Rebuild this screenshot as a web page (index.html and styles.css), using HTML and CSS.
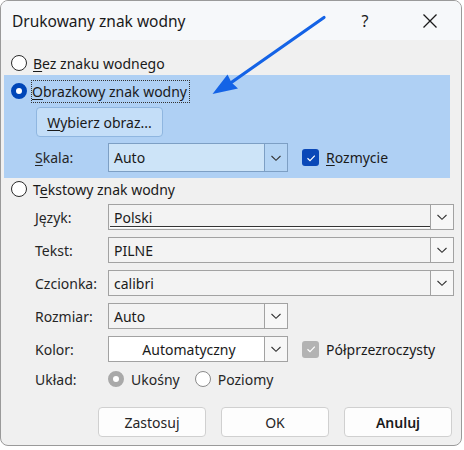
FILE: index.html
```html
<!DOCTYPE html>
<html lang="pl">
<head>
    <meta charset="UTF-8">
    <title>Drukowany znak wodny</title>
    <link rel="stylesheet" href="styles.css">
</head>
<body>
    <div class="dialog">
        <div class="titlebar">
            <span class="title">Drukowany znak wodny</span>
            <span class="help">?</span>
            <span class="close">
                <svg width="16" height="16" viewBox="0 0 16 16"><path d="M1.5 1.5 L14.5 14.5 M14.5 1.5 L1.5 14.5" stroke="#1a1a1a" stroke-width="1.3" fill="none"/></svg>
            </span>
        </div>

        <div class="content">
            <!-- brak znaku -->
            <div class="option first">
                <span class="radio"></span>
                <span><u>B</u>ez znaku wodnego</span>
            </div>

            <!-- obraz -->
            <div class="panel">
                <div class="option">
                    <span class="radio checked"></span>
                    <span class="focus"><u>O</u>brazkowy znak wodny</span>
                </div>
                <button class="pick"><u>W</u>ybierz obraz...</button>
                <div class="field skala">
                    <span class="label"><u>S</u>kala:</span>
                    <div class="combo short blue">
                        <span class="value">Auto</span>
                        <span class="drop"><svg width="12" height="8" viewBox="0 0 12 8"><path d="M1.5 2 L6 6.3 L10.5 2" stroke="#333" stroke-width="1.1" fill="none"/></svg></span>
                    </div>
                    <div class="check">
                        <span class="box on"><svg width="12" height="10" viewBox="0 0 12 10"><path d="M2.5 5.2 L5 7.6 L9.8 2.6" stroke="#fff" stroke-width="1.2" fill="none"/></svg></span>
                        <span><u>R</u>ozmycie</span>
                    </div>
                </div>
            </div>

            <!-- tekst -->
            <div class="option">
                <span class="radio"></span>
                <span>T<u>e</u>kstowy znak wodny</span>
            </div>

            <div class="fields">
                <div class="field">
                    <span class="label">Język:</span>
                    <div class="combo long lang">
                        <span class="value">Polski</span>
                        <span class="drop"><svg width="12" height="8" viewBox="0 0 12 8"><path d="M1.5 2 L6 6.3 L10.5 2" stroke="#333" stroke-width="1.1" fill="none"/></svg></span>
                    </div>
                </div>
                <div class="field">
                    <span class="label">Tekst:</span>
                    <div class="combo long">
                        <span class="value">PILNE</span>
                        <span class="drop"><svg width="12" height="8" viewBox="0 0 12 8"><path d="M1.5 2 L6 6.3 L10.5 2" stroke="#333" stroke-width="1.1" fill="none"/></svg></span>
                    </div>
                </div>
                <div class="field">
                    <span class="label">Czcionka:</span>
                    <div class="combo long">
                        <span class="value">calibri</span>
                        <span class="drop"><svg width="12" height="8" viewBox="0 0 12 8"><path d="M1.5 2 L6 6.3 L10.5 2" stroke="#333" stroke-width="1.1" fill="none"/></svg></span>
                    </div>
                </div>
                <div class="field">
                    <span class="label">Rozmiar:</span>
                    <div class="combo short">
                        <span class="value">Auto</span>
                        <span class="drop"><svg width="12" height="8" viewBox="0 0 12 8"><path d="M1.5 2 L6 6.3 L10.5 2" stroke="#333" stroke-width="1.1" fill="none"/></svg></span>
                    </div>
                </div>
                <div class="field">
                    <span class="label">Kolor:</span>
                    <div class="combo short white">
                        <span class="value center">Automatyczny</span>
                        <span class="drop"><svg width="12" height="8" viewBox="0 0 12 8"><path d="M1.5 2 L6 6.3 L10.5 2" stroke="#333" stroke-width="1.1" fill="none"/></svg></span>
                    </div>
                    <div class="check">
                        <span class="box off"><svg width="12" height="10" viewBox="0 0 12 10"><path d="M2.5 5.2 L5 7.6 L9.8 2.6" stroke="#fff" stroke-width="1.2" fill="none"/></svg></span>
                        <span>Półprzezroczysty</span>
                    </div>
                </div>
                <div class="field layout">
                    <span class="label">Układ:</span>
                    <span class="radio grey checked"></span>
                    <span class="choice">Ukośny</span>
                    <span class="radio grey"></span>
                    <span class="choice">Poziomy</span>
                </div>
            </div>

            <div class="actions">
                <button class="btn">Zastosuj</button>
                <button class="btn">OK</button>
                <button class="btn default">Anuluj</button>
            </div>
        </div>

        <!-- strzałka wskazująca opcję -->
        <svg class="arrow" width="462" height="446" viewBox="0 0 462 446">
            <path d="M323 16.5 L231 81" stroke="#1463e6" stroke-width="3.2" stroke-linecap="round" fill="none"/>
            <path d="M211.5 93 L226.5 73.5 L230.5 81.5 L237 87.5 Z" fill="#1463e6"/>
        </svg>
    </div>
</body>
</html>
```

FILE: styles.css
```css
body {
    margin: 0;
    background-color: #fff;
    font-family: "Noto Sans", "Open Sans", sans-serif;
    font-size: 14px;
    color: #1a1a1a;
}

.dialog {
    position: relative;
    width: 460px;
    height: 444px;
    border: 1px solid #9a9a9a;
    border-radius: 8px;
    background-color: #f0f0f0;
    overflow: hidden;
}

.titlebar {
    display: flex;
    align-items: center;
    height: 39px;
    background-color: #f6f8fa;
}

.title {
    margin-left: 11px;
    font-size: 15.5px;
    flex: 1;
}

.help {
    width: 20px;
    text-align: center;
    font-size: 16px;
    margin-right: 47px;
}

.close {
    display: flex;
    margin-right: 23px;
}

.content {
    padding-left: 3px;
}

u {
    text-decoration-thickness: 1px;
    text-underline-offset: 2px;
}

.option {
    display: flex;
    align-items: center;
    height: 22px;
    padding-left: 7px;
    gap: 6px;
}

.option.first {
    margin-top: 12px;
    margin-bottom: 1px;
}

.radio {
    width: 14px;
    height: 14px;
    border: 1.3px solid #2b2b2b;
    border-radius: 50%;
    background-color: #fff;
    flex: none;
}

.radio.checked {
    width: 6px;
    height: 6px;
    border: 5.5px solid #0046b8;
}

.radio.grey {
    border-color: #8a8a8a;
}

.radio.grey.checked {
    border-color: #a9a9a9;
}

.focus {
    outline: 1px dotted #333;
    outline-offset: 0;
    padding: 0 2px 0 0;
    line-height: 21px;
    margin-left: -1px;
}

.panel {
    width: 446px;
    height: 98px;
    padding-top: 5px;
    background-color: #afd0f4;
}

.pick {
    display: block;
    margin: 5px 0 6px 32px;
    width: 127px;
    height: 30px;
    border: 1px solid #8fb6e0;
    border-radius: 4px;
    background-color: #c4def8;
    font: inherit;
    color: inherit;
}

.fields {
    margin-top: 4px;
}

.field {
    display: flex;
    align-items: center;
    height: 26px;
    padding-left: 31px;
    margin-bottom: 7px;
}

.field.skala {
    height: 29px;
    margin-bottom: 0;
}

.label {
    width: 73px;
    flex: none;
    color: #262626;
}

.combo {
    display: flex;
    height: 100%;
    box-sizing: border-box;
    border: 1px solid #a2a2a2;
    background-color: #f3f3f3;
}

.combo.long {
    width: 346px;
}

.combo.short {
    width: 180px;
}

.combo.blue {
    background-color: #cde4f8;
    border-color: #7d9fc4;
}

.combo.white {
    background-color: #fff;
}

.value {
    flex: 1;
    padding-left: 5px;
    display: flex;
    align-items: center;
    position: relative;
}

.value.center {
    justify-content: center;
}

.lang .value::after {
    content: "";
    position: absolute;
    left: 1px;
    right: 0;
    bottom: 2px;
    height: 1px;
    background-color: #333;
    box-shadow: 0 1px 0 #fff;
}

.drop {
    display: flex;
    align-items: center;
    justify-content: center;
    width: 22px;
    border-left: 1px solid #a2a2a2;
    background-color: #f7f7f7;
}

.blue .drop {
    background-color: #b4d4f4;
    border-color: #7d9fc4;
}

.check {
    display: flex;
    align-items: center;
    gap: 7px;
    margin-left: 14px;
}

.box {
    display: flex;
    align-items: center;
    justify-content: center;
    width: 17px;
    height: 17px;
    border-radius: 3px;
}

.box.on {
    background-color: #0a48b8;
}

.box.off {
    background-color: #b3b3b3;
}

.field.layout {
    height: 22px;
    margin-top: -1px;
}

.choice {
    margin-left: 7px;
    margin-right: 15px;
    color: #262626;
}

.actions {
    display: flex;
    justify-content: flex-end;
    gap: 15px;
    margin-top: 17px;
    padding-right: 9px;
}

.btn {
    width: 108px;
    height: 30px;
    border: 1px solid #d0d0d0;
    border-radius: 4px;
    background-color: #fdfdfd;
    font: inherit;
    color: #262626;
}

.btn.default {
    font-weight: 600;
    color: #1a1a1a;
}

.arrow {
    position: absolute;
    left: 0;
    top: 0;
    pointer-events: none;
}
```
